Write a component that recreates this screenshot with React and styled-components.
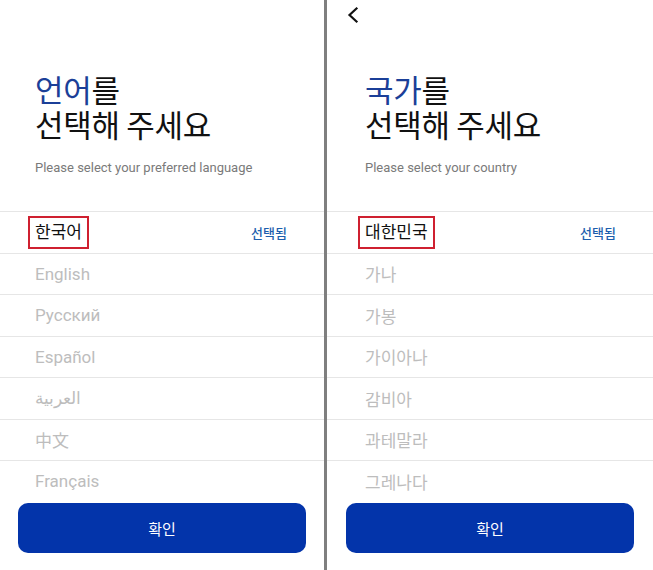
import React from "react";
import styled, { createGlobalStyle } from "styled-components";

const GlobalStyle = createGlobalStyle`
  html, body {
    margin: 0;
    padding: 0;
    background: #ffffff;
  }
  body {
    font-family: Roboto, "Noto Sans CJK KR", sans-serif;
  }
`;

// Two phone screens side by side
const Screens = styled.div`
  display: flex;
  width: 653px;
  height: 570px;
  overflow: hidden;
`;

const Divider = styled.div`
  width: 3px;
  background: #7f7f7f;
  flex-shrink: 0;
`;

const Panel = styled.div`
  width: ${(p) => p.$width}px;
  flex-shrink: 0;
  display: flex;
  flex-direction: column;
  background: #fff;
`;

const TopBar = styled.div`
  height: 30px;
  padding: 6px 0 0 ${(p) => p.$inset}px;
  box-sizing: border-box;
`;

const BackButton = styled.button`
  border: none;
  background: none;
  padding: 0;
  width: 14px;
  height: 18px;
  display: flex;
  cursor: pointer;
`;

// Heading block
const Header = styled.div`
  padding: 41px 20px 0 ${(p) => p.$inset}px;
  height: 181px;
  box-sizing: border-box;
`;

const Title = styled.h1`
  margin: 0;
  font-family: "Noto Sans CJK KR", sans-serif;
  font-weight: 400;
  font-size: 31px;
  line-height: 35px;
  color: #111;
  letter-spacing: -0.3px;
`;

const TitleLine = styled.span`
  display: block;
`;

const Accent = styled.span`
  color: #1b3f98;
`;

const Subtitle = styled.p`
  margin: 19px 0 0;
  font-family: Roboto, "Noto Sans CJK KR", sans-serif;
  font-size: 13px;
  color: #7a7a7a;
`;

const List = styled.ul`
  list-style: none;
  margin: 0;
  padding: 0;
  border-top: 1px solid #e6e6e6;
  height: 287px;
  overflow: hidden;
`;

const Row = styled.li`
  height: 41.5px;
  box-sizing: border-box;
  border-bottom: 1px solid #e6e6e6;
  display: flex;
  align-items: center;
  justify-content: space-between;
  padding: 0 37px 0 ${(p) => p.$inset}px;
`;

const Option = styled.span`
  font-family: Roboto, "Noto Sans CJK KR", "Noto Sans CJK SC", sans-serif;
  font-size: 17px;
  color: ${(p) => (p.$selected ? "#111" : "#bdbdbd")};
  ${(p) =>
    p.$selected &&
    `
    margin-left: -7px;
    padding: 4px 5px;
    border: 2px solid #cf2030;
    line-height: 21px;
  `}
`;

const SelectedTag = styled.span`
  font-family: "Noto Sans CJK KR", sans-serif;
  font-size: 13px;
  font-weight: 500;
  color: #1d5fae;
`;

const Footer = styled.div`
  padding: 4px 0 0;
  display: flex;
  justify-content: center;
`;

const ConfirmButton = styled.button`
  width: 288px;
  height: 50px;
  border: none;
  border-radius: 10px;
  background: #0334aa;
  color: #fff;
  font-family: "Noto Sans CJK KR", sans-serif;
  font-size: 15px;
  cursor: pointer;
`;

const ChevronLeft = () => (
  <svg width="14" height="18" viewBox="0 0 14 18" fill="none">
    <polyline
      points="10.5,2.5 3.5,9 10.5,15.5"
      stroke="#111"
      strokeWidth="2.2"
      strokeLinecap="square"
    />
  </svg>
);

const screens = [
  {
    width: 324,
    inset: 35,
    back: false,
    accent: "언어",
    subtitle: "Please select your preferred language",
    selected: "한국어",
    options: ["English", "Русский", "Español", "العربية", "中文", "Français"],
  },
  {
    width: 326,
    inset: 38,
    back: true,
    accent: "국가",
    subtitle: "Please select your country",
    selected: "대한민국",
    options: ["가나", "가봉", "가이아나", "감비아", "과테말라", "그레나다"],
  },
];

const SelectScreen = ({ screen }) => (
  <Panel $width={screen.width}>
    <TopBar $inset={19}>
      {screen.back && (
        <BackButton aria-label="뒤로">
          <ChevronLeft />
        </BackButton>
      )}
    </TopBar>
    <Header $inset={screen.inset}>
      <Title>
        <TitleLine>
          <Accent>{screen.accent}</Accent>를
        </TitleLine>
        <TitleLine>선택해 주세요</TitleLine>
      </Title>
      <Subtitle>{screen.subtitle}</Subtitle>
    </Header>
    <List>
      <Row $inset={screen.inset}>
        <Option $selected>{screen.selected}</Option>
        <SelectedTag>선택됨</SelectedTag>
      </Row>
      {screen.options.map((o) => (
        <Row key={o} $inset={screen.inset}>
          <Option>{o}</Option>
        </Row>
      ))}
    </List>
    <Footer>
      <ConfirmButton>확인</ConfirmButton>
    </Footer>
  </Panel>
);

export default function App() {
  return (
    <>
      <GlobalStyle />
      <Screens>
        <SelectScreen screen={screens[0]} />
        <Divider />
        <SelectScreen screen={screens[1]} />
      </Screens>
    </>
  );
}
